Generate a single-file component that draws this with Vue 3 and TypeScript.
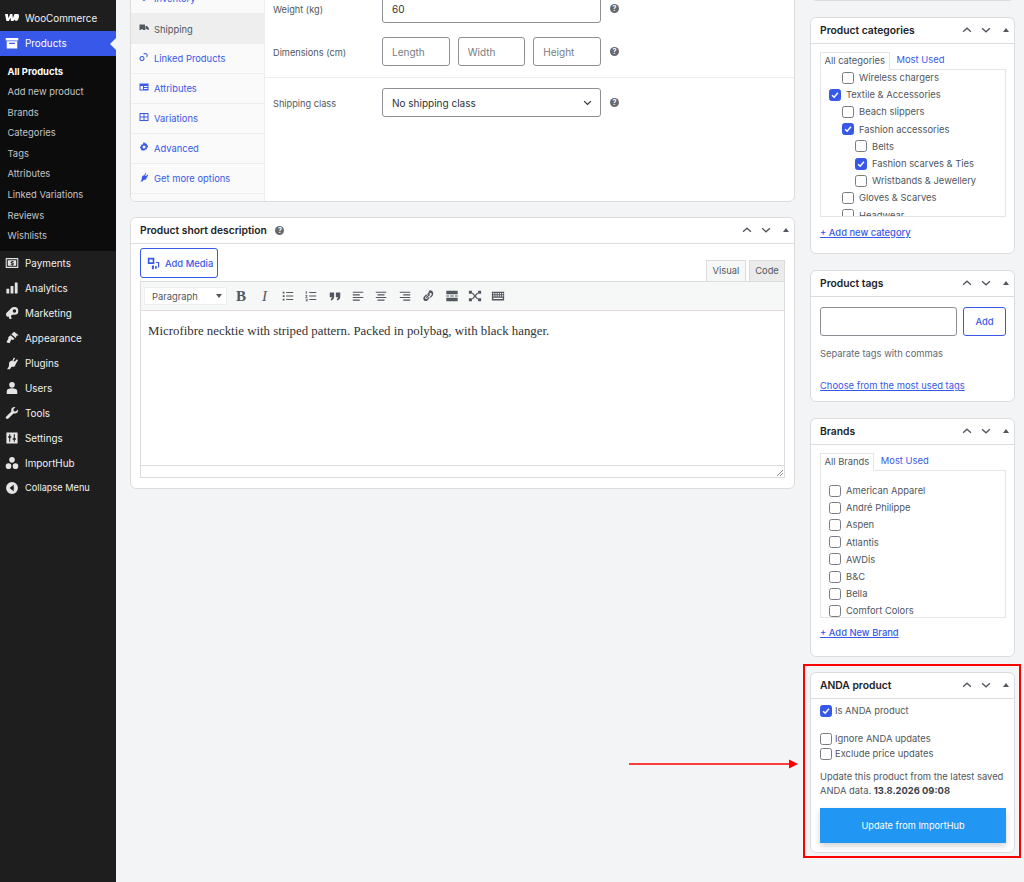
<template>
  <div class="page">
    <!-- Admin menu -->
    <aside class="sidebar">
      <div class="menu-item">
        <svg class="menu-icon woo" viewBox="0 0 20 12"><path d="M0 1h4l1 6 2.500-6h3l.8 6L13.500 1H18c1.500 0 2 1 2 3 0 3-1.500 7-4 7-1.200 0-2-.7-2.300-2L12 11H8.500l-.7-4.500L5.500 11H2z" /></svg>
        <span>WooCommerce</span>
      </div>
      <div class="menu-item current">
        <svg class="menu-icon" viewBox="0 0 20 20"><path d="M1 3h18v3.500H1zM2.500 7.500h15V18h-15zM6 9.500v2h8v-2z" fill-rule="evenodd" /></svg>
        <span>Products</span>
      </div>
      <ul class="submenu">
        <li v-for="(item, i) in submenu" :key="item" :class="{ active: i === 0 }">{{ item }}</li>
      </ul>
      <div v-for="item in menu" :key="item.label" class="menu-item" :class="{ collapse: item.label === 'Collapse Menu' }">
        <svg class="menu-icon" viewBox="0 0 20 20"><path :d="item.icon" fill-rule="evenodd" /></svg>
        <span>{{ item.label }}</span>
      </div>
    </aside>

    <main class="content">
      <div class="main-col">
        <!-- Product data -->
        <section class="panel product-data">
          <ul class="data-tabs">
            <li v-for="tab in dataTabs" :key="tab.label" :class="{ active: tab.label === 'Shipping' }">
              <svg viewBox="0 0 20 20"><path :d="tab.icon" fill-rule="evenodd" /></svg>
              <span>{{ tab.label }}</span>
            </li>
          </ul>
          <div class="data-pane">
            <div class="form-group">
              <div class="field">
                <label>Weight (kg)</label>
                <input class="text-input wide" type="text" value="60" />
                <span class="help">?</span>
              </div>
              <div class="field">
                <label>Dimensions (cm)</label>
                <div class="dims">
                  <input class="text-input" type="text" placeholder="Length" />
                  <input class="text-input" type="text" placeholder="Width" />
                  <input class="text-input" type="text" placeholder="Height" />
                </div>
                <span class="help">?</span>
              </div>
            </div>
            <div class="form-group last">
              <div class="field">
                <label>Shipping class</label>
                <div class="select wide">
                  <span>No shipping class</span>
                  <svg viewBox="0 0 12 8"><path d="M1.500 1.500 6 6l4.500-4.500" /></svg>
                </div>
                <span class="help">?</span>
              </div>
            </div>
          </div>
        </section>

        <!-- Short description -->
        <section class="panel">
          <header class="panel-head">
            <h2>Product short description <span class="help head-help">?</span></h2>
            <div class="controls">
              <svg viewBox="0 0 14 8"><path d="M1.500 6.500 7 1.500l5.500 5" /></svg>
              <svg viewBox="0 0 14 8"><path d="M1.500 1.500 7 6.500l5.500-5" /></svg>
              <i class="caret"></i>
            </div>
          </header>
          <div class="editor-wrap">
            <div class="editor-top">
              <button class="media-btn" type="button">
                <svg viewBox="0 0 16 16"><path d="M1 1h8v7.500H1zM3 3v3.500h4V3zM11 6h4v7h-1.500V7.500H11zM6 10.500h2.500V15H6zM10 11h2v3.500h-2z" fill-rule="evenodd" /></svg>
                Add Media
              </button>
              <div class="editor-tabs">
                <span class="etab on">Visual</span>
                <span class="etab">Code</span>
              </div>
            </div>
            <div class="toolbar">
              <div class="format"><span>Paragraph</span><i class="caret dark"></i></div>
              <div class="tools">
                <b class="tool-text">B</b>
                <em class="tool-text">I</em>
                <svg v-for="(tool, i) in tools" :key="i" viewBox="0 0 16 16"><path :d="tool" fill-rule="evenodd" /></svg>
              </div>
            </div>
            <div class="editor-body">Microfibre necktie with striped pattern. Packed in polybag, with black hanger.</div>
            <div class="status-bar"><svg viewBox="0 0 8 8"><path d="M7 1 1 7M7 4 4 7" /></svg></div>
          </div>
        </section>
      </div>

      <div class="side-col">
        <section class="panel stub"></section>

        <section class="panel">
          <header class="panel-head">
            <h2>Product categories</h2>
            <div class="controls">
              <svg viewBox="0 0 14 8"><path d="M1.500 6.500 7 1.500l5.500 5" /></svg>
              <svg viewBox="0 0 14 8"><path d="M1.500 1.500 7 6.500l5.500-5" /></svg>
              <i class="caret"></i>
            </div>
          </header>
          <div class="panel-body">
            <div class="tax-tabs">
              <span class="tax-tab on">All categories</span>
              <span class="tax-tab">Most Used</span>
            </div>
            <div class="tax-box cats">
              <div v-for="cat in categories" :key="cat.name" class="tax-row" :class="`lvl-${cat.level}`">
                <span class="check" :class="{ checked: cat.checked }">
                  <svg v-if="cat.checked" viewBox="0 0 12 12"><path d="M2.500 6.200 5 8.700l4.500-5.500" /></svg>
                </span>
                <span>{{ cat.name }}</span>
              </div>
            </div>
            <a class="add-link cat-link">+ Add new category</a>
          </div>
        </section>

        <section class="panel">
          <header class="panel-head">
            <h2>Product tags</h2>
            <div class="controls">
              <svg viewBox="0 0 14 8"><path d="M1.500 6.500 7 1.500l5.500 5" /></svg>
              <svg viewBox="0 0 14 8"><path d="M1.500 1.500 7 6.500l5.500-5" /></svg>
              <i class="caret"></i>
            </div>
          </header>
          <div class="panel-body tags-body">
            <div class="tag-row">
              <input class="text-input tag-input" type="text" />
              <button class="add-btn" type="button">Add</button>
            </div>
            <p class="hint">Separate tags with commas</p>
            <a class="add-link plain">Choose from the most used tags</a>
          </div>
        </section>

        <section class="panel">
          <header class="panel-head">
            <h2>Brands</h2>
            <div class="controls">
              <svg viewBox="0 0 14 8"><path d="M1.500 6.500 7 1.500l5.500 5" /></svg>
              <svg viewBox="0 0 14 8"><path d="M1.500 1.500 7 6.500l5.500-5" /></svg>
              <i class="caret"></i>
            </div>
          </header>
          <div class="panel-body brands-body">
            <div class="tax-tabs">
              <span class="tax-tab on">All Brands</span>
              <span class="tax-tab">Most Used</span>
            </div>
            <div class="tax-box brands">
              <div v-for="brand in brands" :key="brand" class="tax-row lvl-0">
                <span class="check"></span>
                <span>{{ brand }}</span>
              </div>
            </div>
            <a class="add-link">+ Add New Brand</a>
          </div>
        </section>

        <section class="panel anda">
          <header class="panel-head">
            <h2>ANDA product</h2>
            <div class="controls">
              <svg viewBox="0 0 14 8"><path d="M1.500 6.500 7 1.500l5.500 5" /></svg>
              <svg viewBox="0 0 14 8"><path d="M1.500 1.500 7 6.500l5.500-5" /></svg>
              <i class="caret"></i>
            </div>
          </header>
          <div class="panel-body anda-body">
            <div class="anda-row first">
              <span class="check checked"><svg viewBox="0 0 12 12"><path d="M2.500 6.200 5 8.700l4.500-5.500" /></svg></span>
              <span>Is ANDA product</span>
            </div>
            <div class="anda-row second"><span class="check"></span><span>Ignore ANDA updates</span></div>
            <div class="anda-row"><span class="check"></span><span>Exclude price updates</span></div>
            <p class="anda-text">Update this product from the latest saved ANDA data. <strong>13.8.2026 09:08</strong></p>
            <button class="import-btn" type="button">Update from ImportHub</button>
          </div>
          <!-- Annotation over the screenshot -->
          <div class="red-box"></div>
          <svg class="red-arrow" viewBox="0 0 169 10"><path d="M0 5h162" /><path class="head" d="M169 5l-9-4.500v9z" /></svg>
        </section>
      </div>
    </main>
  </div>
</template>

<script setup lang="ts">
const submenu: string[] = [
  "All Products",
  "Add new product",
  "Brands",
  "Categories",
  "Tags",
  "Attributes",
  "Linked Variations",
  "Reviews",
  "Wishlists",
];

const menu: { label: string; icon: string }[] = [
  { label: "Payments", icon: "M1 3h18v14H1zM2.500 4.500v11h15v-11zM4 6h12v8H4zM10.800 7H9.400v.9c-1 .2-1.500.8-1.500 1.500 0 1.800 3 1.200 3 2 0 .5-1.400.4-2.600-.1v1.200c.4.200 1 .3 1.600.4v.6h1.400v-.7c1-.2 1.500-.8 1.500-1.600 0-1.800-3-1.300-3-2 0-.5 1.300-.4 2.300 0V7.500c-.4-.1-.8-.2-1.300-.3z" },
  { label: "Analytics", icon: "M2 11h4v7H2zM8 7h4v11H8zM14 2h4v16h-4z" },
  { label: "Marketing", icon: "M13.500 1.500a5.500 5.500 0 0 1 0 11c-.6 0-1.200-.1-1.800-.3L8.500 14l1 4.500H6.500L5 15l-2 .2C1.500 14 .8 11.500 2 10l6.500-6.500c1-1.200 3-2 5-2zm0 3a2.500 2.500 0 1 0 0 5 2.500 2.500 0 0 0 0-5z" },
  { label: "Appearance", icon: "M13 1l6.500 5-3 .8-1 3.200-6.500-5.500zM8 6l5.500 5-2 2-2.500-1-2.500 5.500L2 16l3-5.500-.5-1.500z" },
  { label: "Plugins", icon: "M12.500 2l2 1.200-2.500 3.800 2 1 3-3.200 1.500 1.700-3 4.500-1.500 4-5 .8L7 19H3l2.500-4 .5-6 3-2.500 1.200 1z" },
  { label: "Users", icon: "M10 1.500a4 4 0 1 1 0 8 4 4 0 0 1 0-8zM2.500 14.500c0-2.500 3.500-4 7.500-4s7.500 1.500 7.500 4v4h-15z" },
  { label: "Tools", icon: "M18.500 5l-3.200 3-2.800-.5-.5-2.800L15 1.500c-3.500-1-6.500 1.500-6.200 4.800 0 .6.100 1 .3 1.500L1.800 15c-1 1-1 2.200 0 3s2 1 3 0l7.400-7.400c3.500 1.200 7.300-1.800 6.300-5.600z" },
  { label: "Settings", icon: "M2 2h16v16H2zM6 4.500v3H4.500v2H6v6h1.500v-6H9v-2H7.500v-3zM12.500 4.500v6H11v2h1.500v3H14v-3h1.500v-2H14v-6z" },
  { label: "ImportHub", icon: "M10 1.500a4 4 0 1 1 0 8 4 4 0 0 1 0-8zM5 10.500a4 4 0 1 1 0 8 4 4 0 0 1 0-8zM15 10.500a4 4 0 1 1 0 8 4 4 0 0 1 0-8z" },
  { label: "Collapse Menu", icon: "M10 1.500a8.500 8.500 0 1 1 0 17 8.500 8.500 0 0 1 0-17zM12.500 5.500 6.500 10l6 4.500z" },
];

const dataTabs: { label: string; icon: string }[] = [
  { label: "Inventory", icon: "M10 2l7 4v8l-7 4-7-4V6z" },
  { label: "Shipping", icon: "M1 3h11v11H8a2 2 0 0 0-4 0H1zM13 6h3l3.500 4v4h-2a2 2 0 0 0-4 0H13z" },
  { label: "Linked Products", icon: "M12.500 2a5 5 0 0 1 3.500 8.500L14.500 9a3 3 0 1 0-4.500-4L8.500 3.500A5 5 0 0 1 12.500 2zM6 8a5 5 0 1 1 0 10A5 5 0 0 1 6 8zm0 2a3 3 0 1 0 0 6 3 3 0 0 0 0-6z" },
  { label: "Attributes", icon: "M1 3h18v14H1zM3 8v7h5V8zm7 0v2h7V8zm0 4v2h7v-2z" },
  { label: "Variations", icon: "M1 2h18v16H1zM3 4v5h6V4zm8 0v5h6V4zM3 11v5h6v-5zm8 0v5h6v-5z" },
  { label: "Advanced", icon: "M8.500 1h3l.5 2.500 2-1 2.200 2.200-1 2 2.800.8v3l-2.800.5 1 2.200-2.200 2.200-2-1-.5 2.600h-3L8 16.400l-2 1-2.200-2.200 1-2.200L2 12.500v-3l2.800-.8-1-2L6 4.500l2 1zM10 7a3 3 0 1 0 0 6 3 3 0 0 0 0-6z" },
  { label: "Get more options", icon: "M12.500 2l2 1.200-2.500 3.800 2 1 3-3.200 1.500 1.700-3 4.500-1.500 4-5 .8L7 19H3l2.500-4 .5-6 3-2.500 1.200 1z" },
];

// Icônes de la barre d'outils de l'éditeur
const tools: string[] = [
  "M2 3h2v2H2zM2 7h2v2H2zM2 11h2v2H2zM6 3.500h8v1H6zM6 7.500h8v1H6zM6 11.500h8v1H6z",
  "M2 2.500h1.200v3H2zM1.500 7h2.500v1H3L4 9.500v.5H1.500v-.8H3L1.500 7.800zM2 11h2v3H2v-.8h1v-.3H2v-.6h1v-.5H2zM6 3.500h8v1H6zM6 7.500h8v1H6zM6 11.500h8v1H6z",
  "M2 4h5v4.500C7 11 5.500 12.500 3.500 13L3 11.500c1-.3 1.500-1 1.500-2H2zM9 4h5v4.500c0 2.500-1.500 4-3.500 4.500L10 11.500c1-.3 1.500-1 1.500-2H9z",
  "M2 3h12v1.300H2zM2 6h8v1.300H2zM2 9h12v1.300H2zM2 12h8v1.300H2z",
  "M2 3h12v1.300H2zM4 6h8v1.300H4zM2 9h12v1.300H2zM4 12h8v1.300H4z",
  "M2 3h12v1.300H2zM6 6h8v1.300H6zM2 9h12v1.300H2zM6 12h8v1.300H6z",
  "M10 1.500a4 4 0 0 1 4 4c0 1-.5 2-1.200 2.800L11 10l-1-1 1.800-1.800c1.500-1.500-.5-3.500-2-2L8 7 7 6l1.500-1.700C9 2.500 9.500 1.500 10 1.500zM6 6l1 1-1.800 1.800c-1.500 1.500.5 3.500 2 2L9 9l1 1-1.500 1.700C7 14 5 14.500 3.500 13s-1-3.500.5-5zM5.500 9.500l4-4 1 1-4 4z",
  "M1.500 2h13v4h-13zM1.500 7.300h3v1.400h-3zM6 7.300h4v1.400H6zM11.500 7.300h3v1.400h-3zM1.500 10h13v4h-13z",
  "M1 2h3.500v3.500H1zM11.500 2H15v3.500h-3.500zM1 10.500h3.500V14H1zM11.500 10.500H15V14h-3.500zM4.500 5l1-1 2.500 3 2.500-3 1 1L9 8l2.500 3-1 1L8 9l-2.500 3-1-1L7 8z",
  "M1 3h14v10H1zM2.500 4.500v1.500H4V4.500zM5 4.500v1.500h1.500V4.500zM7.500 4.500v1.500H9V4.500zM10 4.500v1.500h1.500V4.500zM12.500 4.500v1.500H14V4.500zM2.500 7v1.500H4V7zM5 7v1.500h1.500V7zM7.500 7v1.500H9V7zM10 7v1.500h1.500V7zM12.500 7v1.500H14V7zM2.500 10v1.500h11V10z",
];

const categories: { name: string; level: number; checked?: boolean }[] = [
  { name: "Wireless chargers", level: 1 },
  { name: "Textile & Accessories", level: 0, checked: true },
  { name: "Beach slippers", level: 1 },
  { name: "Fashion accessories", level: 1, checked: true },
  { name: "Belts", level: 2 },
  { name: "Fashion scarves & Ties", level: 2, checked: true },
  { name: "Wristbands & Jewellery", level: 2 },
  { name: "Gloves & Scarves", level: 1 },
  { name: "Headwear", level: 1 },
];

const brands: string[] = [
  "American Apparel",
  "André Philippe",
  "Aspen",
  "Atlantis",
  "AWDis",
  "B&C",
  "Bella",
  "Comfort Colors",
];
</script>

<style>
html,
body {
  margin: 0;
  background: #f3f4f6;
}
</style>

<style scoped>
* {
  box-sizing: border-box;
}

.page {
  display: flex;
  height: 882px;
  overflow: hidden;
  font-family: Inter, "Liberation Sans", sans-serif;
  font-size: 9.4px;
  color: #3c434a;
  background: #f3f4f6;
}

.sidebar {
  width: 116px;
  flex-shrink: 0;
  padding-top: 6px;
  background: #1e1e1e;
  color: #f0f0f1;
}

.menu-item {
  display: flex;
  align-items: center;
  height: 25px;
  padding: 0 0 2px 4.500px;
  gap: 6.500px;
  font-size: 9.900px;
  position: relative;
}

.menu-item.collapse {
  font-size: 9.200px;
}

.menu-icon {
  width: 14px;
  height: 14px;
  fill: #e4e4e4;
  flex-shrink: 0;
}

.woo {
  height: 9px;
  fill: #fff;
}

.current {
  background: #3858e9;
  color: #fff;
}

.current .menu-icon {
  fill: #fff;
}

.current::after {
  content: "";
  position: absolute;
  right: 0;
  top: 7px;
  border: 6px solid transparent;
  border-right-color: #f3f4f6;
  border-left: 0;
}

.submenu {
  list-style: none;
  margin: 0;
  padding: 5.500px 0 5px 7.500px;
  height: 195px;
  background: #0c0c0c;
  color: #c3c4c7;
}

.submenu li {
  height: 20.600px;
  line-height: 20.600px;
}

.submenu .active {
  color: #fff;
  font-weight: 700;
}

.content {
  flex: 1;
  display: flex;
  gap: 15px;
  padding: 0 9px 0 14px;
  align-items: flex-start;
}

.main-col {
  width: 665px;
  margin-top: -20px;
  display: flex;
  flex-direction: column;
  gap: 15px;
}

.side-col {
  width: 205px;
  margin-top: -20px;
  display: flex;
  flex-direction: column;
  gap: 16px;
}

.panel {
  background: #fff;
  border: 1px solid #dcdcde;
  border-radius: 6px;
}

.stub {
  height: 21px;
}

.product-data {
  display: flex;
  height: 222px;
  overflow: hidden;
}

.data-tabs {
  width: 134px;
  margin: 0;
  padding: 3px 0 0;
  list-style: none;
  background: #fafafa;
  border-right: 1px solid #eee;
}

.data-tabs li {
  display: flex;
  align-items: center;
  gap: 5px;
  height: 30px;
  padding-left: 8px;
  color: #3858e9;
  border-bottom: 1px solid #eee;
}

.data-tabs svg {
  width: 10px;
  height: 10px;
  fill: currentColor;
  margin-top: -3px;
}

.data-tabs .active {
  background: #eee;
  color: #50575e;
  border-bottom: 0;
}

.data-pane {
  flex: 1;
}

.form-group {
  padding: 13px 0 11px 8px;
  border-bottom: 1px solid #eee;
}

.form-group.last {
  padding-top: 10px;
  border-bottom: 0;
}

.field {
  display: flex;
  align-items: center;
}

.field + .field {
  margin-top: 14px;
}

.field label {
  width: 109px;
  flex-shrink: 0;
  padding-top: 1px;
  font-size: 9.200px;
  color: #50575e;
}

.text-input {
  height: 29px;
  min-width: 0;
  border: 1px solid #8c8f94;
  border-radius: 3px;
  padding: 0 9px;
  font: inherit;
  font-size: 10px;
  color: #2c3338;
  background: #fff;
  outline: none;
}

.text-input::placeholder {
  color: #787c82;
}

.wide {
  width: 219px;
}

.dims {
  width: 219px;
  display: flex;
  gap: 8px;
}

.dims .text-input {
  flex: 1;
  width: 0;
}

.select {
  height: 29px;
  display: flex;
  align-items: center;
  justify-content: space-between;
  padding: 0 8px 0 9px;
  border: 1px solid #8c8f94;
  border-radius: 3px;
  font-size: 10px;
  color: #2c3338;
}

.select svg {
  width: 9px;
  height: 6px;
  fill: none;
  stroke: #2c3338;
  stroke-width: 1.600;
}

.help {
  width: 9px;
  height: 9px;
  margin-left: 9px;
  border-radius: 50%;
  background: #646970;
  color: #fff;
  font-size: 7px;
  font-weight: 700;
  line-height: 9px;
  text-align: center;
  flex-shrink: 0;
}

.head-help {
  display: inline-block;
  margin-left: 6px;
  vertical-align: 1px;
}

.panel-head {
  display: flex;
  align-items: center;
  justify-content: space-between;
  height: 26px;
  padding: 0 0 2px 9px;
  border-bottom: 1px solid #dcdcde;
}

.panel-head h2 {
  margin: 0;
  font-size: 10.300px;
  font-weight: 600;
  color: #1d2327;
}

.controls {
  display: flex;
  align-items: center;
  width: 52px;
  gap: 9px;
}

.controls svg {
  width: 10px;
  height: 6px;
  fill: none;
  stroke: #50575e;
  stroke-width: 1.800;
}

.caret {
  display: block;
  width: 0;
  height: 0;
  margin-left: 3px;
  border: 3px solid transparent;
  border-bottom: 4px solid #50575e;
  border-top: 0;
}

.caret.dark {
  margin: 0;
  border-bottom: 0;
  border-top: 4px solid #50575e;
}

.editor-wrap {
  padding: 4px 9px 10px;
}

.editor-top {
  display: flex;
  justify-content: space-between;
  align-items: flex-end;
  height: 33px;
}

.media-btn {
  height: 30px;
  width: 78px;
  margin-bottom: 3px;
  display: flex;
  align-items: center;
  gap: 5px;
  padding: 0 0 0 6px;
  border: 1px solid #3858e9;
  border-radius: 3px;
  background: #fff;
  color: #3858e9;
  font: inherit;
  font-weight: 500;
}

.media-btn svg {
  width: 13px;
  height: 13px;
  fill: #3858e9;
}

.editor-tabs {
  display: flex;
  gap: 3px;
}

.etab {
  height: 21px;
  width: 36px;
  line-height: 20px;
  text-align: center;
  background: #ebebeb;
  border: 1px solid #dcdcde;
  border-bottom: 0;
  color: #50575e;
}

.etab.on {
  width: 40px;
  background: #f6f7f7;
}

.toolbar {
  height: 30px;
  display: flex;
  align-items: center;
  padding-left: 4px;
  background: #f6f7f7;
  border: 1px solid #dcdcde;
  border-bottom: 1px solid #e4d8d8;
}

.format {
  width: 83px;
  height: 18px;
  display: flex;
  align-items: center;
  justify-content: space-between;
  padding: 0 4px 0 7px;
  margin-left: -1px;
  background: #fff;
  border: 1px solid #eee;
  color: #50575e;
}

.tools {
  display: flex;
  align-items: center;
  margin-left: 7px;
  gap: 9.400px;
}

.tools svg {
  width: 14px;
  height: 14px;
  fill: #50575e;
}

.tool-text {
  width: 14px;
  text-align: center;
  font-size: 15px;
  color: #50575e;
  font-family: "Liberation Serif", serif;
}

.editor-body {
  height: 154px;
  padding: 13px 7px;
  background: #fff;
  border-left: 1px solid #dcdcde;
  border-right: 1px solid #dcdcde;
  font-family: "Liberation Serif", serif;
  font-size: 12.850px;
  color: #333;
}

.status-bar {
  height: 13px;
  background: #fff;
  border: 1px solid #dcdcde;
  display: flex;
  justify-content: flex-end;
  align-items: flex-end;
}

.status-bar svg {
  width: 8px;
  height: 8px;
  stroke: #8c8f94;
  fill: none;
}

.panel-body {
  padding: 8px 8px 15px 9px;
}

.tax-tabs {
  display: flex;
  height: 18px;
  position: relative;
  z-index: 1;
}

.tax-tab {
  padding: 0 7px;
  line-height: 16px;
  color: #3858e9;
}

.tax-tab.on {
  padding: 0 3.500px;
  color: #50575e;
  background: #fff;
  border: 1px solid #e5e5e5;
  border-bottom: 1px solid #fff;
}

.tax-box {
  height: 148px;
  overflow: hidden;
  border: 1px solid #e5e5e5;
  margin-top: -1px;
}

.tax-box.cats .tax-row:first-child {
  margin-top: -1px;
}

.tax-box.brands {
  padding-top: 11px;
}

.brands-body {
  padding-bottom: 17px;
}

.tax-row {
  display: flex;
  align-items: center;
  gap: 5px;
  height: 17.200px;
  color: #50575e;
}

.lvl-0 {
  padding-left: 8px;
}

.lvl-1 {
  padding-left: 21px;
}

.lvl-2 {
  padding-left: 34px;
}

.check {
  width: 12px;
  height: 12px;
  flex-shrink: 0;
  display: block;
  border: 1px solid #787c82;
  border-radius: 2.500px;
  background: #fff;
}

.check.checked {
  background: #3858e9;
  border-color: #3858e9;
}

.check svg {
  display: block;
  width: 10px;
  height: 10px;
  fill: none;
  stroke: #fff;
  stroke-width: 1.800;
}

.add-link {
  display: block;
  margin-top: 9px;
  line-height: 12px;
  color: #3858e9;
  text-decoration: underline;
  font-weight: 500;
}

.cat-link {
  margin: 10px 0 -1px;
}

.tag-row {
  display: flex;
  justify-content: space-between;
}

.tags-body {
  padding: 10px 8px 9px 9px;
}

.tag-input {
  width: 137px;
}

.add-btn {
  width: 43px;
  height: 29px;
  border: 1px solid #3858e9;
  border-radius: 3px;
  background: #fff;
  color: #3858e9;
  font: inherit;
  font-weight: 500;
  padding: 0;
}

.hint {
  margin: 12px 0 0;
  line-height: 12px;
  color: #646970;
}

.plain {
  margin-top: 20px;
  font-weight: 400;
}

.anda {
  position: relative;
  margin-top: -1px;
}

.anda-body {
  padding: 4px 8px 9px 9px;
}

.anda-row {
  display: flex;
  align-items: center;
  gap: 3px;
  height: 15px;
  color: #50575e;
}

.anda-row.second {
  margin-top: 13px;
}

.anda-text {
  margin: 9px 0 0;
  line-height: 14px;
  color: #50575e;
}

.anda-text strong {
  color: #3c434a;
}

.import-btn {
  display: block;
  width: 100%;
  height: 35px;
  margin-top: 10px;
  border: 0;
  background: #2196f3;
  color: #fff;
  font: inherit;
  font-size: 9.200px;
  box-shadow: 0 3px 6px rgba(0, 0, 0, 0.18);
}

.red-box {
  position: absolute;
  left: -8px;
  top: -9px;
  width: 218px;
  height: 194px;
  border: 2px solid #f00;
  pointer-events: none;
}

.red-arrow {
  position: absolute;
  left: -182px;
  top: 86px;
  width: 169px;
  height: 10px;
  stroke: #f00;
  stroke-width: 1.500;
  fill: none;
}

.red-arrow .head {
  fill: #f00;
  stroke: none;
}
</style>
